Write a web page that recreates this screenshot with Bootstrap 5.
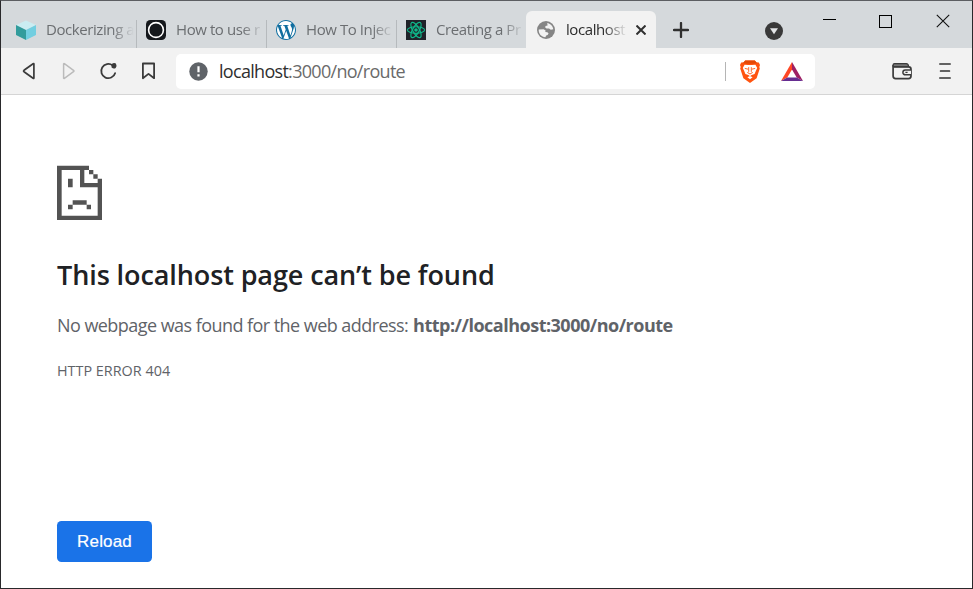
<!DOCTYPE html>
<html lang="en">
<head>
<meta charset="utf-8">
<title>localhost</title>
<link href="https://cdn.jsdelivr.net/npm/bootstrap@5.3.0/dist/css/bootstrap.min.css" rel="stylesheet">
<style>
body{font-family:"Open Sans","Noto Sans",sans-serif;overflow:hidden}
svg{display:block;flex:none}
.browser{width:973px;height:589px;border:1px solid #29292b;border-top-color:#5c5e62;background:#fff}
.tabstrip{height:47px;background:#d5d9dc;padding-left:5px}
.tab-item{width:130px;height:37px;padding:0 0 0 10px;color:#6b6e71;font-size:15px;position:relative}
.tab-item.sep::after{content:"";position:absolute;right:-1px;top:9px;width:1px;height:28px;background:#b6babd}
.tab-item.current{background:#f2f2f2;border-radius:6px 6px 0 0;color:#2c2c2c}
.tab-label{width:88px;margin-left:10px;white-space:nowrap;letter-spacing:-.42px;line-height:22px;padding-bottom:1px;-webkit-mask-image:linear-gradient(90deg,#000 75%,transparent 100%);mask-image:linear-gradient(90deg,#000 75%,transparent 100%)}
.current .tab-label{width:63px;-webkit-mask-image:linear-gradient(90deg,#000 60%,transparent 97%);mask-image:linear-gradient(90deg,#000 60%,transparent 97%)}
.tab-close{margin-left:7px}
.newtab{margin:0 0 10px 17px}
.tabsearch{margin:0 0 8px 76px}
.winctl{margin:0 0 20px 40px;gap:43px}
.toolbar{height:47px;background:#f2f2f2;border-bottom:1px solid #d5d5d5;padding:0 21px 0 18px}
.navbtns{gap:20px;width:157px;flex:none}
.address{width:639px;height:35px;border-radius:5px;padding:0 12px 0 13px;flex:none}
.url{font-size:18px;letter-spacing:-.7px;margin-left:11px;color:#6a6a6a;line-height:24px}
.url b{font-weight:400;color:#2f2f2f}
.divline{width:1px;height:19px;background:#b5b5b5}
.shield{margin-left:14px}
.rewards{margin-left:21px}
.menu-lines{margin-left:27px}
.error-page{padding:70px 56px 0}
.heading{font-size:27px;font-weight:600;color:#202124;line-height:36px;letter-spacing:-.1px;margin:36px 0 0}
.summary{font-size:18px;line-height:27px;color:#5f6368;margin:19px 0 0;white-space:nowrap;letter-spacing:-.55px}
.summary strong{letter-spacing:-.5px;margin-left:.7px}
.code{font-size:14.4px;line-height:22px;color:#5f6368;margin:21px 0 0}
.reload{width:95px;height:41px;margin-top:139px;background:#1a73e8;border-radius:4.5px;color:#fff;font:500 17px "Liberation Sans",Arial,sans-serif;letter-spacing:.15px;-webkit-text-stroke:.2px #fff;padding:0;border:0}
</style>
<script src="https://cdn.jsdelivr.net/npm/bootstrap@5.3.0/dist/js/bootstrap.bundle.min.js"></script>
</head>
<body>
<div class="browser d-flex flex-column">
  <div class="tabstrip d-flex align-items-end">
    <div class="tab-item sep d-flex align-items-center">
      <svg width="20" height="20" viewBox="0 0 20 20"><path d="M10 .5 20 5 10 10 0 5Z" fill="#cbedf2"/><path d="M0 5 10 10V20L0 15Z" fill="#329c9c"/><path d="M20 5 10 10V20L20 15Z" fill="#72cee0"/></svg>
      <div class="tab-label">Dockerizing a</div>
    </div>
    <div class="tab-item sep d-flex align-items-center">
      <svg width="20" height="20" viewBox="0 0 20 20"><rect width="20" height="20" rx="4.5" fill="#15181c"/><circle cx="10" cy="10" r="7.4" fill="none" stroke="#fff" stroke-width="1.6"/></svg>
      <div class="tab-label">How to use r</div>
    </div>
    <div class="tab-item sep d-flex align-items-center">
      <svg width="20" height="20" viewBox="0 0 24 24" fill="#116e9f"><circle cx="12" cy="12" r="12" fill="#fff"/><path d="M21.469 6.825c.84 1.537 1.318 3.3 1.318 5.175 0 3.979-2.156 7.456-5.363 9.325l3.295-9.527c.615-1.54.82-2.771.82-3.864 0-.405-.026-.78-.07-1.11m-7.981.105c.647-.03 1.232-.105 1.232-.105.582-.075.514-.93-.067-.899 0 0-1.755.135-2.88.135-1.064 0-2.85-.15-2.85-.15-.585-.03-.661.855-.075.885 0 0 .54.061 1.125.09l1.68 4.605-2.37 7.08L5.354 6.9c.649-.03 1.234-.1 1.234-.1.585-.075.516-.93-.065-.896 0 0-1.746.138-2.874.138-.2 0-.438-.008-.69-.015C4.911 3.15 8.235 1.215 12 1.215c2.809 0 5.365 1.072 7.286 2.833-.046-.003-.091-.009-.141-.009-1.06 0-1.812.923-1.812 1.914 0 .89.513 1.643 1.06 2.531.411.72.89 1.643.89 2.977 0 .915-.354 1.994-.821 3.479l-1.075 3.585-3.9-11.61.001.015zM12 22.784c-1.059 0-2.081-.153-3.048-.437l3.237-9.406 3.315 9.087c.024.053.05.101.078.149-1.12.393-2.325.609-3.582.609M1.211 12c0-1.564.336-3.05.935-4.39L7.29 21.709C3.694 19.96 1.212 16.271 1.211 12M12 0C5.385 0 0 5.385 0 12s5.385 12 12 12 12-5.385 12-12S18.615 0 12 0"/></svg>
      <div class="tab-label">How To Injec</div>
    </div>
    <div class="tab-item d-flex align-items-center">
      <svg width="20" height="20" viewBox="0 0 20 20"><rect width="20" height="20" fill="#20232a"/><g fill="none" stroke="#0fb98b" stroke-width="1.15"><ellipse cx="10" cy="10" rx="8.6" ry="3.3"/><ellipse cx="10" cy="10" rx="8.6" ry="3.3" transform="rotate(60 10 10)"/><ellipse cx="10" cy="10" rx="8.6" ry="3.3" transform="rotate(120 10 10)"/></g><circle cx="10" cy="10" r="1.8" fill="#0fb98b"/></svg>
      <div class="tab-label">Creating a Pr</div>
    </div>
    <div class="tab-item current d-flex align-items-center">
      <svg width="20" height="20" viewBox="0 0 20 20"><circle cx="10" cy="10" r="9" fill="#858585"/><path d="M11.2 2.9C14 3.3 16.8 5.6 17.3 9.2L14.8 9.8 13 8.4 10.6 8.6 9.2 7.6 9.5 6 11.6 5.5ZM2.7 9.6 7.6 9.2 9.6 10.4 9.3 12 11.4 12.2 12.6 13.5 11.6 15 10.2 15.4 9.4 17.3C5.6 17.2 2.4 13.8 2.7 9.6Z" fill="#f2f2f2"/></svg>
      <div class="tab-label">localhost</div>
      <svg class="tab-close" width="10" height="10" viewBox="0 0 10 10"><path d="M.5.5 9.5 9.5M9.5.5.5 9.5" stroke="#303030" stroke-width="2"/></svg>
    </div>
    <svg class="newtab" width="16" height="16" viewBox="0 0 16 16"><path d="M8 1V15M1 8H15" stroke="#303030" stroke-width="2.3" stroke-linecap="round"/></svg>
    <svg class="tabsearch" width="18" height="18" viewBox="0 0 18 18"><circle cx="9" cy="9" r="9" fill="#393939"/><path d="M5 6.3H13L9 12.3Z" fill="#e3e5e7"/></svg>
    <div class="winctl d-flex align-items-center">
      <svg width="13" height="13" viewBox="0 0 13 13"><path d="M0 4.5H13" stroke="#000"/></svg>
      <svg width="13" height="13" viewBox="0 0 13 13"><rect x=".5" y=".5" width="12" height="12" fill="none" stroke="#000"/></svg>
      <svg width="15" height="14" viewBox="-1 0 15 14"><path d="M.8.8 13.2 13.2M13.2.8.8 13.2" stroke="#111" stroke-width="1.1"/></svg>
    </div>
  </div>
  <div class="toolbar d-flex align-items-center">
    <div class="navbtns d-flex align-items-center">
      <svg width="20" height="20" viewBox="0 0 20 20"><path d="M14.9 3.1Q14.9 2.2 14.1 2.7L5 9.3Q4.1 10 5 10.7L14.1 17.3Q14.9 17.8 14.9 16.9Z" fill="none" stroke="#3b3b3b" stroke-width="1.7"/></svg>
      <svg width="20" height="20" viewBox="0 0 20 20"><path d="M4.6 3.1Q4.6 2.2 5.4 2.7L14.5 9.3Q15.4 10 14.5 10.7L5.4 17.3Q4.6 17.8 4.6 16.9Z" fill="none" stroke="#bbb" stroke-width="1.5"/></svg>
      <svg width="20" height="20" viewBox="0.6 0 20 20"><path d="M14.2 4.4A7.1 7.1 0 1 0 16.7 12.2" fill="none" stroke="#3b3b3b" stroke-width="1.8" stroke-linecap="round"/><path d="M12.9 3.4Q15.3 1.3 17.5 2.4Q18.7 4.3 17.3 6.9Q15.3 8.1 13.2 6.5Z" fill="#3b3b3b"/></svg>
      <svg width="20" height="20" viewBox="0.5 0 20 20"><path d="M4.4 2.5H15.6V17.2L10 12.9 4.4 17.2Z" fill="none" stroke="#3b3b3b" stroke-width="1.8" stroke-linejoin="round"/></svg>
    </div>
    <div class="address bg-white d-flex align-items-center">
      <svg width="19" height="19" viewBox="0 0 19 19"><circle cx="9.5" cy="9.5" r="9.2" fill="#5f6368"/><path d="M9.5 4.2V10.2M9.5 12.2V14.5" stroke="#fff" stroke-width="2.2"/></svg>
      <div class="url"><b>localhost</b>:3000/no/route</div>
      <div class="divline ms-auto"></div>
      <svg class="shield" width="20" height="23" viewBox="0 0 20 23"><path d="M5.2.5H14.8L16.5 2.5 18.8 2.4 20 5 19.3 7 19.8 8.5 16.6 18.3 10 23 3.4 18.3.2 8.5.7 7 0 5 1.2 2.4 3.5 2.5Z" fill="#ff5410"/><path d="M5.2.5H14.8L16.5 2.5 18 3 13 3.7H7L2 3 3.5 2.5Z" fill="#e34806"/><path d="M4.6 4.8 8 5.1H12L15.4 4.8 17.2 8 15.9 10.8 14.6 14 11.6 15 10 16.3 8.4 15 5.4 14 4.1 10.8 2.8 8ZM7.4 17.3 10 16 12.6 17.3 10 19.3Z" fill="#fff"/><path d="M4.8 8.4 8.2 9.2M15.2 8.4 11.8 9.2M8.7 7.2V11.5L7.6 12.6 10 14 12.4 12.6 11.3 11.5V7.2" fill="none" stroke="#ff5410" stroke-width=".9"/></svg>
      <svg class="rewards" width="22" height="19" viewBox="0 0 22 19"><path d="M11 0 0 19 6.3 15.6 11 7.6Z" fill="#ff4724"/><path d="M11 0 22 19 15.7 15.6 11 7.6Z" fill="#9e1f63"/><path d="M0 19H22L15.7 15.4H6.3Z" fill="#662d91"/></svg>
    </div>
    <svg width="20" height="18" viewBox="0 0 20 18" class="ms-auto"><path d="M1.1 3V14Q1.1 16.6 3.7 16.6H16.4Q19 16.6 19 14V7.2Q19 4.8 16.6 4.8H2" fill="none" stroke="#3b3b3b" stroke-width="1.7"/><path d="M1.2 4.6V3Q1.2 1.7 2.5 1.7H14.3Q16.4 1.7 16.6 4.6Z" fill="#777" stroke="#3b3b3b" stroke-width="1.3"/><path d="M19 8H13.3a2.4 2.4 0 0 0 0 4.8H19" fill="#f2f2f2" stroke="#3b3b3b" stroke-width="1.5"/><path d="M13.4 10.4H15.6" stroke="#3b3b3b" stroke-width="1.3"/></svg>
    <svg width="12" height="18" viewBox="0 0 12 18" class="menu-lines"><path d="M.8 2H11.2M1.6 9H10.4M.8 16H11.2" stroke="#333" stroke-width="1.7" stroke-linecap="round"/></svg>
  </div>
  <main class="error-page">
    <svg width="46" height="56" viewBox="51 45 138 168" fill="#535353"><path d="M51 47H147V60H133V99H173V86H186V210H51ZM65 60V197H173V112H120V60Z" fill-rule="evenodd"/><path d="M147 60h13v13h-13zM160 73h13v13h-13zM84 86h14v26H84zM98 151h42v13H98zM84 164h14v14H84zM140 164h13v14H140z"/></svg>
    <h1 class="heading">This localhost page can’t be found</h1>
    <p class="summary">No webpage was found for the web address: <strong>http://localhost:3000/no/route</strong></p>
    <p class="code">HTTP ERROR 404</p>
    <button class="reload btn d-block" type="button">Reload</button>
  </main>
</div>
</body>
</html>
